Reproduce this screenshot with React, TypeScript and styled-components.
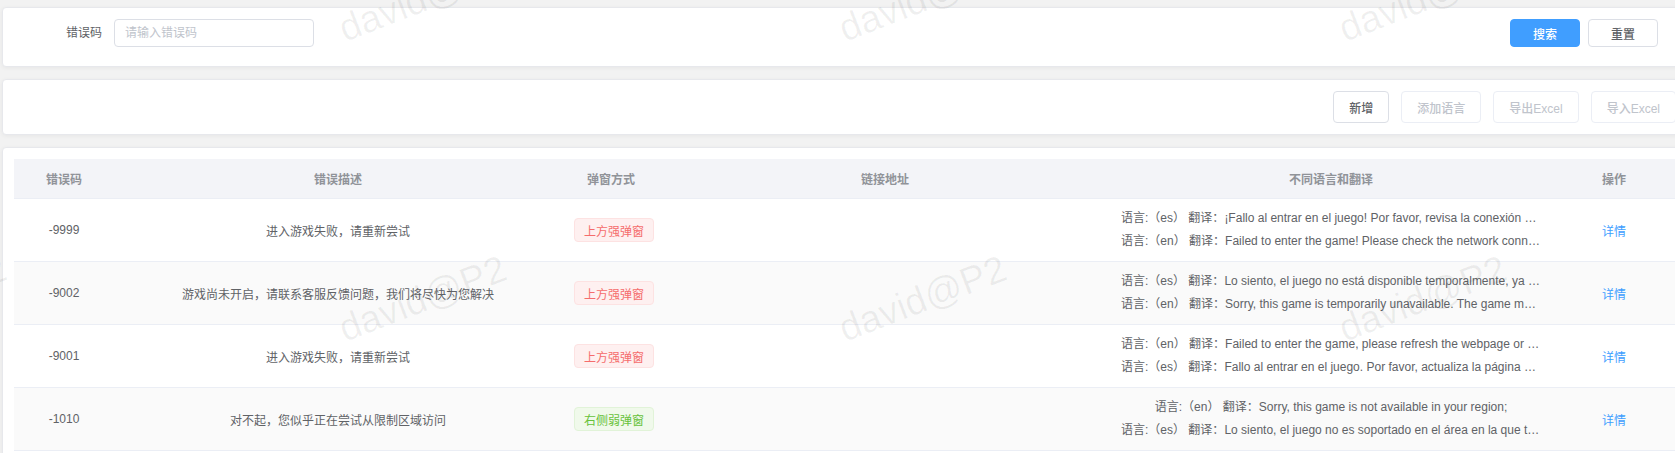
import React from "react";
import styled, { createGlobalStyle, css } from "styled-components";

const GlobalStyle = createGlobalStyle`
  html, body {
    margin: 0;
    padding: 0;
    overflow: hidden;
    background: #f2f2f2;
  }
  body {
    font-family: "Liberation Sans", "Noto Sans CJK SC", sans-serif;
    font-size: 12px;
    color: #606266;
  }
  *, *::before, *::after { box-sizing: border-box; }
`;

const COLUMNS = "100px 448px 98px 450px 442px 124px";

const Page = styled.div`
  position: relative;
  width: 1688px;
  padding: 7px 0 0 2px;
  display: flex;
  flex-direction: column;
  gap: 12px;
`;

const Card = styled.section`
  background: #fff;
  border: 1px solid #e7e8ec;
  border-radius: 4px;
  box-shadow: 0 1px 4px rgba(0, 0, 0, 0.05);
`;

const SearchCard = styled(Card)`
  display: flex;
  align-items: center;
  padding: 11px 29px 19px 11px;
`;

const ToolbarCard = styled(Card)`
  display: flex;
  justify-content: flex-end;
  gap: 12px;
  padding: 11px 11px;
`;

const TableCard = styled(Card)`
  padding: 11px;
`;

const FormItem = styled.div`
  display: flex;
  align-items: center;
`;

const Label = styled.label`
  width: 100px;
  padding-right: 12px;
  text-align: right;
  line-height: 28px;
  color: #606266;
  font-size: 12px;
`;

const Input = styled.input`
  width: 200px;
  height: 28px;
  border: 1px solid #dcdfe6;
  border-radius: 4px;
  padding: 0 10px;
  font-family: inherit;
  font-size: 12px;
  color: #606266;
  outline: none;
  &::placeholder { color: #c0c4cc; }
`;

const Spacer = styled.div`
  flex: 1;
`;

const ButtonGroup = styled.div`
  display: flex;
  gap: 8px;
`;

type Variant = "primary" | "default" | "disabled";

const Button = styled.button<{ $variant?: Variant; $size?: "small" | "medium" }>`
  font-family: inherit;
  font-size: 12px;
  font-weight: 500;
  border-radius: 4px;
  border: 1px solid #dcdfe6;
  background: #fff;
  color: #606266;
  cursor: pointer;
  white-space: nowrap;
  ${(p) =>
    p.$size === "small"
      ? css`
          height: 28px;
          padding: 0 22px;
        `
      : css`
          height: 32px;
          padding: 0 15px;
        `}
  ${(p) =>
    p.$variant === "primary" &&
    css`
      background: #409eff;
      border-color: #409eff;
      color: #fff;
    `}
  ${(p) =>
    p.$variant === "disabled" &&
    css`
      color: #c0c4cc;
      border-color: #ebeef5;
      cursor: not-allowed;
    `}
`;

const Table = styled.div`
  width: 100%;
`;

const HeaderRow = styled.div`
  display: grid;
  grid-template-columns: ${COLUMNS};
  align-items: center;
  height: 40px;
  background: #f3f4f8;
  border-bottom: 1px solid #ebeef5;
`;

const HeadCell = styled.div`
  padding: 0 12px;
  text-align: center;
  font-weight: bold;
  color: #909399;
  white-space: nowrap;
`;

const BodyRow = styled.div<{ $striped?: boolean }>`
  display: grid;
  grid-template-columns: ${COLUMNS};
  align-items: center;
  height: 63px;
  background: ${(p) => (p.$striped ? "#fafafa" : "#fff")};
  border-bottom: 1px solid #ebeef5;
`;

const Cell = styled.div`
  min-width: 0;
  padding: 0 12px;
  text-align: center;
  color: #606266;
  white-space: nowrap;
`;

const TranslationCell = styled(Cell)`
  display: flex;
  flex-direction: column;
  align-items: center;
  padding: 0 11px;
`;

const TranslationLine = styled.div`
  max-width: 100%;
  line-height: 23px;
  overflow: hidden;
  text-overflow: ellipsis;
  white-space: nowrap;
`;

const Tag = styled.span<{ $type: "danger" | "success" }>`
  display: inline-flex;
  align-items: center;
  height: 24px;
  padding: 0 9px;
  border-radius: 4px;
  border: 1px solid;
  font-size: 12px;
  ${(p) =>
    p.$type === "danger"
      ? css`
          background: #fef0f0;
          border-color: #fde2e2;
          color: #f56c6c;
        `
      : css`
          background: #f0f9eb;
          border-color: #e1f3d8;
          color: #67c23a;
        `}
`;

const LinkButton = styled.button`
  background: none;
  border: none;
  padding: 0;
  font-family: inherit;
  font-size: 12px;
  color: #409eff;
  cursor: pointer;
`;

const WatermarkLayer = styled.div`
  position: absolute;
  inset: 0;
  pointer-events: none;
  overflow: hidden;
  z-index: 10;
`;

const Mark = styled.span`
  position: absolute;
  font-family: "Liberation Sans", sans-serif;
  font-size: 38px;
  line-height: 38px;
  color: rgba(0, 0, 0, 0.06);
  white-space: nowrap;
  transform-origin: 0 32px;
  transform: rotate(-21deg);
`;

type Row = {
  code: string;
  desc: string;
  popup: { text: string; type: "danger" | "success" };
  link: string;
  translations: { lang: string; text: string }[];
};

const rows: Row[] = [
  {
    code: "-9999",
    desc: "进入游戏失败，请重新尝试",
    popup: { text: "上方强弹窗", type: "danger" },
    link: "",
    translations: [
      { lang: "es", text: "¡Fallo al entrar en el juego! Por favor, revisa la conexión de red e inténtalo de nuevo." },
      { lang: "en", text: "Failed to enter the game! Please check the network connection and try again." },
    ],
  },
  {
    code: "-9002",
    desc: "游戏尚未开启，请联系客服反馈问题，我们将尽快为您解决",
    popup: { text: "上方强弹窗", type: "danger" },
    link: "",
    translations: [
      { lang: "es", text: "Lo siento, el juego no está disponible temporalmente, ya que está en mantenimiento." },
      { lang: "en", text: "Sorry, this game is temporarily unavailable. The game may be under maintenance." },
    ],
  },
  {
    code: "-9001",
    desc: "进入游戏失败，请重新尝试",
    popup: { text: "上方强弹窗", type: "danger" },
    link: "",
    translations: [
      { lang: "en", text: "Failed to enter the game, please refresh the webpage or try again later." },
      { lang: "es", text: "Fallo al entrar en el juego. Por favor, actualiza la página web o inténtalo de nuevo." },
    ],
  },
  {
    code: "-1010",
    desc: "对不起，您似乎正在尝试从限制区域访问",
    popup: { text: "右侧弱弹窗", type: "success" },
    link: "",
    translations: [
      { lang: "en", text: "Sorry, this game is not available in your region;" },
      { lang: "es", text: "Lo siento, el juego no es soportado en el área en la que te encuentras;" },
    ],
  },
];

const headers = ["错误码", "错误描述", "弹窗方式", "链接地址", "不同语言和翻译", "操作"];

const watermarks: { x: number; y: number }[] = [];
for (let r = 0; r < 2; r++) {
  for (let c = 0; c < 4; c++) {
    watermarks.push({ x: -155 + c * 500, y: 42 + r * 300 });
  }
}

export default function App() {
  return (
    <>
      <GlobalStyle />
      <Page>
        <SearchCard>
          <FormItem>
            <Label>错误码</Label>
            <Input placeholder="请输入错误码" />
          </FormItem>
          <Spacer />
          <ButtonGroup>
            <Button $size="small" $variant="primary">搜索</Button>
            <Button $size="small">重置</Button>
          </ButtonGroup>
        </SearchCard>

        <ToolbarCard>
          <Button>新增</Button>
          <Button $variant="disabled">添加语言</Button>
          <Button $variant="disabled">导出Excel</Button>
          <Button $variant="disabled">导入Excel</Button>
        </ToolbarCard>

        <TableCard>
          <Table>
            <HeaderRow>
              {headers.map((h) => (
                <HeadCell key={h}>{h}</HeadCell>
              ))}
            </HeaderRow>
            {rows.map((row, i) => (
              <BodyRow key={row.code} $striped={i % 2 === 1}>
                <Cell>{row.code}</Cell>
                <Cell>{row.desc}</Cell>
                <Cell>
                  <Tag $type={row.popup.type}>{row.popup.text}</Tag>
                </Cell>
                <Cell>{row.link}</Cell>
                <TranslationCell>
                  {row.translations.map((t) => (
                    <TranslationLine key={t.lang}>
                      语言:（{t.lang}） 翻译：{t.text}
                    </TranslationLine>
                  ))}
                </TranslationCell>
                <Cell>
                  <LinkButton>详情</LinkButton>
                </Cell>
              </BodyRow>
            ))}
          </Table>
        </TableCard>

        <WatermarkLayer>
          {watermarks.map((w, i) => (
            <Mark key={i} style={{ left: w.x, top: w.y - 32 }}>
              david@P2
            </Mark>
          ))}
        </WatermarkLayer>
      </Page>
    </>
  );
}
